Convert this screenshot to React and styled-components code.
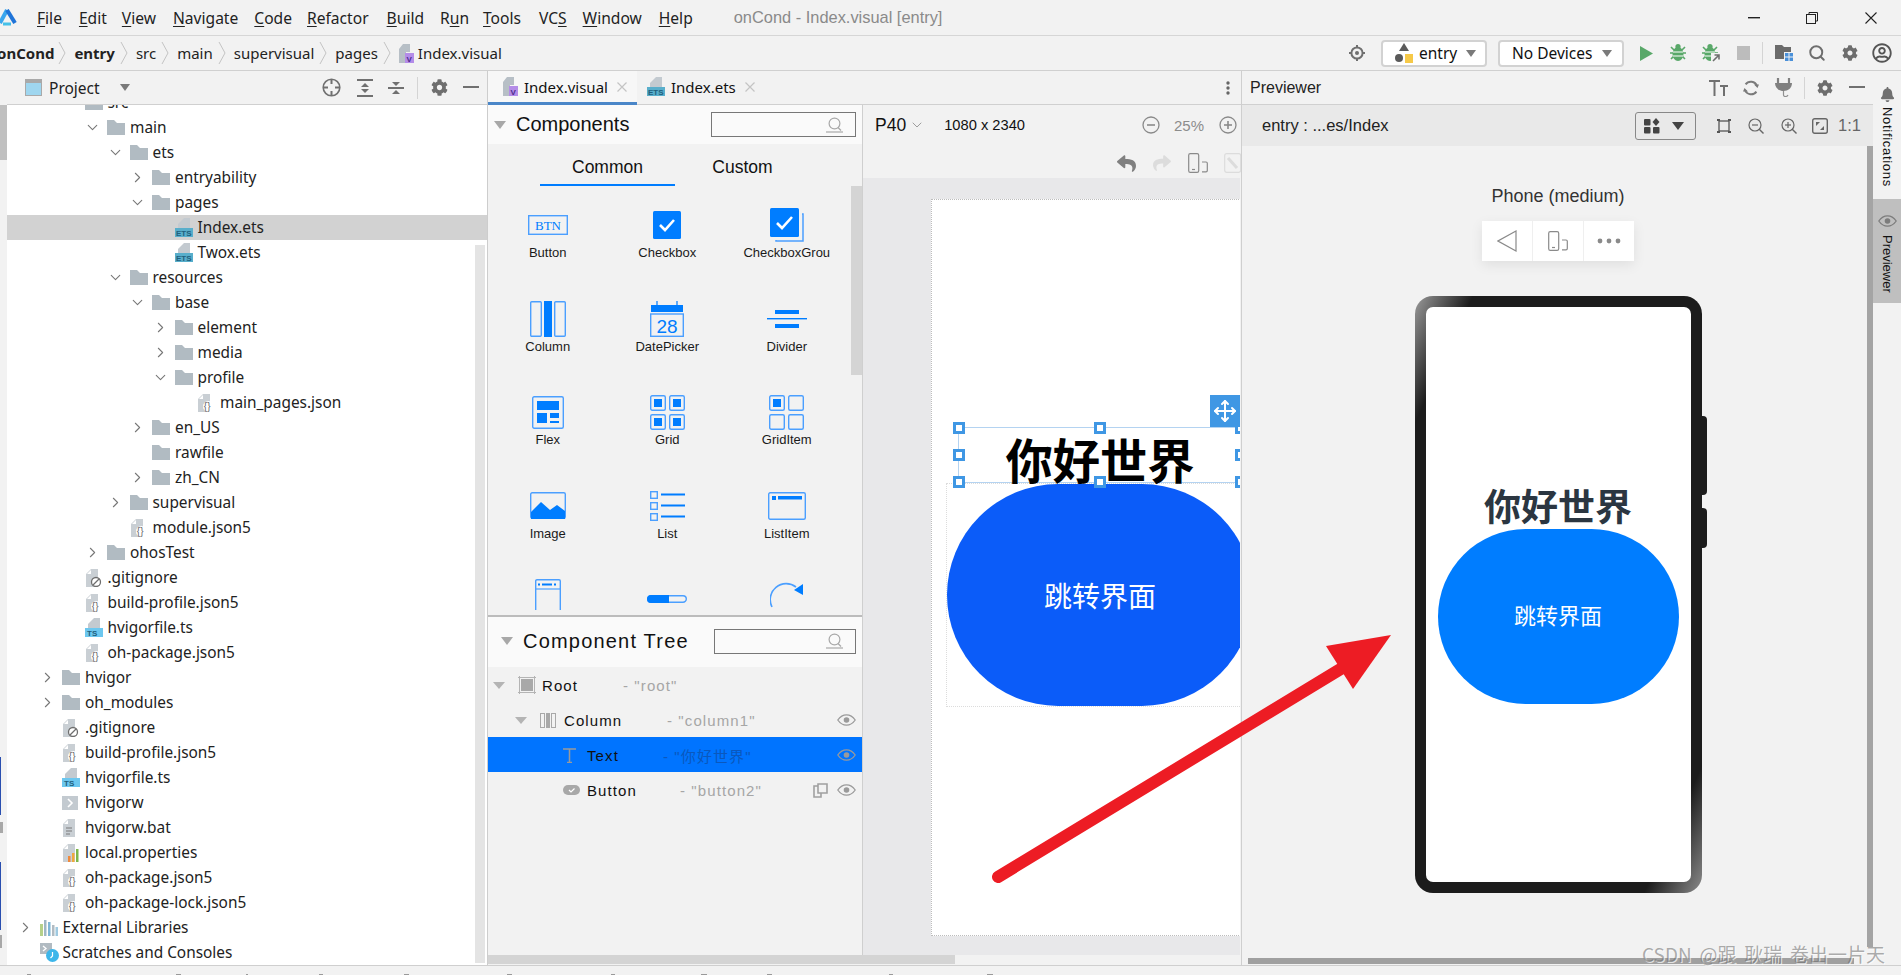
import React from 'react'
import styled, { createGlobalStyle } from 'styled-components'
import { ChevronRight, ChevronDown, Search, Move } from 'lucide-react'
import { FaCog, FaBell, FaRegUserCircle, FaReply, FaShare } from 'react-icons/fa'

const ARIAL = "'Liberation Sans', Arial, sans-serif"
const UI = "'Noto Sans', 'Noto Sans CJK SC', sans-serif"
const CJK = "'Noto Sans CJK SC', 'Liberation Sans', sans-serif"
const BLUE = '#007dff'
const SOFT = '#4b9fff'

const Global = createGlobalStyle`
  html, body { margin: 0; padding: 0; background: #f2f2f2; }
  * { box-sizing: border-box; }
`

const Frame = styled.div`
  position: relative;
  width: 1901px;
  height: 975px;
  overflow: hidden;
  display: flex;
  flex-direction: column;
  background: #f2f2f2;
  font-family: ${UI};
  color: #222;
`

/* title bar */
const TitleBar = styled.div`
  height: 36px;
  flex: none;
  display: flex;
  align-items: center;
  padding-right: 24px;
  border-bottom: 1px solid #d6d6d6;
  overflow: hidden;
`
const Menu = styled.span`
  font-size: 15.6px;
  margin-left: ${p => p.$ml}px;
  color: #222;
  flex: none;
  u { text-underline-offset: 2px; }
`
const WindowTitle = styled.span`
  margin-left: 41px;
  font-family: ${ARIAL};
  font-size: 16.4px;
  color: #8a8a8a;
  flex: none;
`
const Tool = styled.span`
  display: inline-flex;
  align-items: center;
  flex: none;
  margin-left: ${p => p.$ml || 0}px;
  color: ${p => p.$color || '#6e6e6e'};
`
const Pushed = styled(Tool)`
  margin-left: auto;
`

/* navigation bar */
const NavBar = styled.div`
  height: 35px;
  flex: none;
  display: flex;
  align-items: center;
  padding-right: 9px;
  border-bottom: 1px solid #d0d0d0;
  overflow: hidden;
`
const Crumb = styled.span`
  font-size: ${p => p.$size || 15}px;
  font-weight: ${p => (p.$bold ? 700 : 400)};
  margin-left: ${p => p.$ml || 0}px;
  flex: none;
`
const Select = styled.div`
  width: ${p => p.$w}px;
  height: 27px;
  margin-left: ${p => p.$ml}px;
  padding: 0 11px 0 12px;
  flex: none;
  display: flex;
  align-items: center;
  background: #fff;
  border: 2px solid #d2d2d2;
  border-radius: 4px;
  font-size: 15px;
  color: #111;
`
const Caret = styled.span`
  display: inline-block;
  flex: none;
  width: 0;
  height: 0;
  margin-left: ${p => p.$ml || 0}px;
  border-left: ${p => p.$w / 2}px solid transparent;
  border-right: ${p => p.$w / 2}px solid transparent;
  border-top: ${p => p.$h}px solid ${p => p.$color || '#7a7a7a'};
`
const Sep = styled.span`
  width: 1px;
  height: 22px;
  flex: none;
  background: #d4d4d4;
  margin-left: ${p => p.$ml}px;
`

/* workspace */
const Workspace = styled.div`
  flex: 1;
  min-height: 0;
  display: flex;
`
const LeftStrip = styled.div`
  width: 7px;
  flex: none;
  display: flex;
  flex-direction: column;
  align-items: flex-start;
  overflow: hidden;
  padding-top: 34px;
`
const StripActive = styled.div`
  width: 7px;
  height: 55px;
  background: #c0c0c0;
  flex: none;
`
const StripTick = styled.div`
  width: ${p => p.$w}px;
  height: ${p => p.$h}px;
  margin-top: ${p => p.$mt}px;
  background: ${p => p.$color};
  flex: none;
`

const ProjectPanel = styled.div`
  width: 481px;
  flex: none;
  display: flex;
  flex-direction: column;
  position: relative;
  background: #fff;
  border-right: 1px solid #cdcdcd;
`
const PanelHeader = styled.div`
  height: 34px;
  flex: none;
  display: flex;
  align-items: center;
  padding: ${p => p.$pad || '0 8px 0 18px'};
  background: #f2f2f2;
  border-bottom: 1px solid #d0d0d0;
  font-size: ${p => p.$size || 15}px;
`
const TreeScroll = styled.div`
  flex: 1;
  min-height: 0;
  overflow: hidden;
`
const TreeInner = styled.div`
  margin-top: -15px;
`
const TreeRow = styled.div`
  height: 25px;
  display: flex;
  align-items: center;
  padding-left: ${p => 9.5 + 22.5 * p.$d}px;
  background: ${p => (p.$selected ? '#d2d2d2' : 'transparent')};
  font-size: 15.4px;
  color: #222;
  white-space: nowrap;
`
const Arrow = styled.span`
  width: 23px;
  flex: none;
  display: flex;
  color: #777;
`
const IconSlot = styled.span`
  width: 23px;
  flex: none;
  display: flex;
  align-items: center;
`
const ProjectScroll = styled.div`
  position: absolute;
  left: 468px;
  top: 174px;
  width: 10px;
  height: 718px;
  background: #e4e4e4;
`

/* centre column */
const CenterColumn = styled.div`
  width: 754px;
  flex: none;
  display: flex;
  flex-direction: column;
  border-right: 1px solid #cfcfcf;
`
const TabBar = styled.div`
  height: 34px;
  flex: none;
  display: flex;
  align-items: stretch;
  border-bottom: 1px solid #d0d0d0;
  padding-right: 11px;
`
const Tab = styled.div`
  width: ${p => p.$w}px;
  flex: none;
  display: flex;
  align-items: center;
  padding-left: ${p => p.$pad}px;
  margin-bottom: -1px;
  font-size: 15px;
  color: #111;
  background: ${p => (p.$active ? '#f7f7f7' : 'transparent')};
  border-bottom: 3px solid ${p => (p.$active ? '#4a86c8' : 'transparent')};
`
const TabClose = styled.span`
  margin-left: ${p => p.$ml}px;
  color: #c4c4c4;
  display: flex;
`
const KebabSlot = styled(Pushed)`
  align-self: center;
`
const CenterBody = styled.div`
  flex: 1;
  min-height: 0;
  display: flex;
`
const HScrollTrack = styled.div`
  height: 10px;
  flex: none;
  background: #f2f2f2;
`
const HScrollThumb = styled.div`
  width: 467px;
  height: 9px;
  background: #d4d4d4;
`

/* components palette */
const Palette = styled.div`
  width: 375px;
  flex: none;
  display: flex;
  flex-direction: column;
  border-right: 1px solid #cfcfcf;
  background: #f2f2f2;
  font-family: ${ARIAL};
`
const SectionHead = styled.div`
  height: ${p => p.$h}px;
  flex: none;
  display: flex;
  align-items: center;
  background: #fafafa;
  padding: 0 6px ${p => p.$lift || 0}px ${p => p.$pad}px;
`
const SectionTitle = styled.span`
  margin-left: 10px;
  font-size: 20px;
  letter-spacing: ${p => p.$spacing || 0}px;
  color: #111;
`
const SearchBox = styled.div`
  margin-left: auto;
  width: ${p => p.$w}px;
  height: 25px;
  flex: none;
  display: flex;
  align-items: center;
  justify-content: flex-end;
  padding-right: 12px;
  border: 1.5px solid #777;
`
const PaletteTabs = styled.div`
  height: 42px;
  flex: none;
  display: flex;
  padding-left: 52px;
`
const PaletteTab = styled.div`
  width: ${p => p.$w}px;
  display: flex;
  align-items: center;
  justify-content: center;
  font-size: 17.5px;
  color: #111;
  padding-top: 6px;
  border-bottom: 2px solid ${p => (p.$active ? BLUE : 'transparent')};
`
const PaletteBody = styled.div`
  position: relative;
  height: 424px;
  flex: none;
  overflow: hidden;
  padding-top: 19px;
  margin-bottom: 5px;
`
const PaletteGrid = styled.div`
  display: grid;
  grid-template-columns: repeat(3, 119.5px);
  grid-auto-rows: 93.6px;
`
const PaletteCell = styled.div`
  display: flex;
  flex-direction: column;
  align-items: center;
`
const CellIcon = styled.div`
  height: 40px;
  display: flex;
  align-items: center;
  justify-content: center;
`
const CellLabel = styled.div`
  height: 16px;
  line-height: 16px;
  font-size: 13px;
  color: #1a1a1a;
  white-space: nowrap;
`
const PaletteScrollbar = styled.div`
  position: absolute;
  right: 0;
  top: 0;
  width: 11px;
  height: 189px;
  background: #d4d4d4;
`
const TreeSection = styled.div`
  flex: 1;
  min-height: 0;
  border-top: 2px solid #bcbcbc;
  display: flex;
  flex-direction: column;
`
const CompRow = styled.div`
  height: 35px;
  flex: none;
  display: flex;
  align-items: center;
  padding-top: 1px;
  padding-left: ${p => p.$indent + 5}px;
  padding-right: 6px;
  background: ${p => (p.$selected ? '#0074ff' : 'transparent')};
  font-size: 15px;
  letter-spacing: 1.1px;
  white-space: nowrap;
`
const CompCaret = styled.span`
  width: 25px;
  flex: none;
  display: flex;
`
const CompIcon = styled.span`
  width: 24px;
  flex: none;
  display: flex;
  align-items: center;
`
const CompName = styled.span`
  width: ${p => p.$w}px;
  flex: none;
  color: #111;
`
const CompId = styled.span`
  color: ${p => (p.$selected ? '#0a58bd' : '#a6a6a6')};
  font-family: ${ARIAL}, ${CJK};
`
const RowActions = styled.span`
  margin-left: auto;
  display: flex;
  align-items: center;
  gap: 9px;
`

/* design canvas */
const Canvas = styled.div`
  flex: 1;
  min-width: 0;
  display: flex;
  flex-direction: column;
  overflow: hidden;
  font-family: ${ARIAL};
`
const CanvasTools = styled.div`
  height: 73px;
  flex: none;
  padding: 0 0 0 12px;
`
const ToolRow = styled.div`
  height: ${p => p.$h}px;
  display: flex;
  align-items: center;
  justify-content: ${p => (p.$end ? 'flex-end' : 'flex-start')};
  overflow: hidden;
`
const DeviceName = styled.span`
  font-size: 17.5px;
  color: #111;
`
const Resolution = styled.span`
  font-size: 14.7px;
  margin-left: 19px;
  color: #111;
`
const Zoom = styled.span`
  font-size: 15px;
  margin-left: 14px;
  color: #8c8c8c;
`
const CanvasArea = styled.div`
  position: relative;
  flex: 1;
  min-height: 0;
  background: #e8e8ea;
  padding: 21px 0 0 68px;
  overflow: hidden;
  border-right: 1px solid #f2f2f2;
`
const Page = styled.div`
  width: 400px;
  height: 737px;
  background: #fff;
  border: 1px dotted #bdbdbd;
  padding: 227px 0 0 14px;
`
const PageColumn = styled.div`
  width: 308px;
  display: flex;
  flex-direction: column;
  align-items: center;
`
const SelectedBox = styled.div`
  position: relative;
  width: 284px;
  height: 56px;
  flex: none;
  border: 1.5px solid #b4d3f1;
  display: flex;
  justify-content: center;
  font-family: ${CJK};
  font-weight: 700;
  font-size: 47.3px;
  line-height: 62px;
  color: #000;
  white-space: nowrap;
`
const Handle = styled.span`
  position: absolute;
  left: ${p => p.$x}%;
  top: ${p => p.$y}%;
  width: 12px;
  height: 12px;
  transform: translate(-50%, -50%);
  background: #fff;
  border: 3px solid #3f97e4;
`
const MoveHandle = styled.span`
  position: absolute;
  right: -1px;
  top: -33px;
  width: 32px;
  height: 32px;
  background: #3f97e4;
  color: #fff;
  display: flex;
  align-items: center;
  justify-content: center;
  padding-right: 3px;
`
const ButtonFrame = styled.div`
  border: 1px dotted #dcdcdc;
  flex: none;
`
const DesignButton = styled.div`
  width: 306px;
  height: 222px;
  border-radius: 112px;
  background: #0b5cf9;
  color: #fff;
  display: flex;
  align-items: center;
  justify-content: center;
  font-family: ${CJK};
  font-size: 28px;
`

/* previewer */
const Preview = styled.div`
  position: relative;
  width: 631px;
  flex: none;
  display: flex;
  flex-direction: column;
  font-family: ${ARIAL};
`
const PreviewBar = styled.div`
  height: 41px;
  flex: none;
  display: flex;
  align-items: center;
  padding: 0 12px 0 20px;
  background: #e9e9e9;
  font-size: 16.5px;
  color: #222;
`
const PreviewSelect = styled.div`
  margin-left: auto;
  width: 61px;
  height: 28px;
  flex: none;
  display: flex;
  align-items: center;
  padding: 0 8px;
  gap: 12px;
  border: 1px solid #888;
  border-radius: 3px;
`
const PreviewBody = styled.div`
  flex: 1;
  min-height: 0;
  display: flex;
  flex-direction: column;
  align-items: center;
  padding-top: 39px;
  padding-left: 1px;
`
const DeviceLabel = styled.div`
  height: 22px;
  line-height: 22px;
  font-size: 18px;
  color: #333;
`
const DeviceTools = styled.div`
  margin-top: 14px;
  width: 152px;
  height: 40px;
  flex: none;
  display: flex;
  background: #fff;
  box-shadow: 0 4px 12px rgba(0, 0, 0, 0.08);
`
const DeviceTool = styled.div`
  flex: 1;
  display: flex;
  align-items: center;
  justify-content: center;
  & + & { border-left: 1px solid #efefef; }
`
const Phone = styled.div`
  position: relative;
  margin-top: 35px;
  width: 287px;
  height: 597px;
  flex: none;
  padding: 11px;
  border-radius: 18px;
  background: linear-gradient(114.5deg, #9a9a9a 0, #1c1c1c 10.4%, #1c1c1c 89.6%, #8a8a8a 100%);
`
const PhoneKey = styled.span`
  position: absolute;
  right: -5px;
  top: ${p => p.$top}px;
  width: 6px;
  height: ${p => p.$h}px;
  background: #1c1c1c;
  border-radius: 0 4px 4px 0;
`
const Screen = styled.div`
  height: 100%;
  background: #fff;
  border-radius: 7px;
  display: flex;
  flex-direction: column;
  align-items: center;
  justify-content: center;
  padding-bottom: 4px;
  font-family: ${CJK};
`
const PhoneText = styled.div`
  height: 48px;
  line-height: 48px;
  font-size: 37px;
  font-weight: 700;
  color: #2b3641;
`
const PhoneButton = styled.div`
  width: 241px;
  height: 175px;
  flex: none;
  padding-bottom: 6px;
  border-radius: 88px;
  background: ${BLUE};
  color: #fff;
  font-size: 22px;
  display: flex;
  align-items: center;
  justify-content: center;
`
const VScroll = styled.div`
  position: absolute;
  right: 0;
  top: 75px;
  width: 6px;
  height: 801px;
  background: #a4a4a4;
`
const BottomScroll = styled.div`
  position: absolute;
  left: 6px;
  bottom: 1px;
  width: 606px;
  height: 6px;
  background: #a0a0a0;
`

/* right tool strip */
const RightStrip = styled.div`
  width: 28px;
  flex: none;
  display: flex;
  flex-direction: column;
  align-items: center;
  padding-top: 16px;
  font-family: ${ARIAL};
  font-size: 13px;
  color: #111;
`
const VerticalLabel = styled.span`
  writing-mode: vertical-rl;
  margin-top: ${p => p.$mt}px;
  letter-spacing: ${p => p.$spacing || 0}px;
  flex: none;
`
const StripTab = styled.div`
  width: 28px;
  height: 104px;
  flex: none;
  margin-top: 12px;
  padding-top: 16px;
  background: #bfbfbf;
  display: flex;
  flex-direction: column;
  align-items: center;
`

const StatusBar = styled.div`
  height: 10px;
  flex: none;
  display: flex;
  align-items: flex-end;
  background: #f2f2f2;
  border-top: 1px solid #cfcfcf;
  overflow: hidden;
`
const StatusTip = styled.span`
  width: ${p => p.$w}px;
  height: 1px;
  margin-left: ${p => p.$ml}px;
  flex: none;
  background: #999;
`
const Watermark = styled.div`
  position: absolute;
  right: 16px;
  bottom: 9px;
  font-family: ${CJK};
  font-size: 19px;
  word-spacing: 3.5px;
  line-height: 24px;
  color: rgba(105, 105, 105, 0.55);
  text-shadow: 1px 1px 0 rgba(255, 255, 255, 0.7);
  white-space: nowrap;
`
const Annotation = styled.svg`
  position: absolute;
  left: 0;
  top: 0;
  pointer-events: none;
`

/* ---- icons ---- */
const IcoSvg = styled.svg`
  display: block;
  flex: none;
`
const Ico = ({ w, h, children }) => (
  <IcoSvg width={w} height={h} viewBox={`0 0 ${w} ${h}`} fill="none">{children}</IcoSvg>
)

const Logo = () => (
  <Ico w={17} h={17}>
    <path d="M7 1 L0 14" stroke="#3aa6ee" strokeWidth="4" />
    <path d="M7 1 L15 14" stroke="#1f74d8" strokeWidth="4" />
    <path d="M3 15 H11" stroke="#45c0e8" strokeWidth="3" />
  </Ico>
)
const Thin = ({ h = 24 }) => (
  <Ico w={9} h={h}><path d={`M1 1 L7 ${h / 2} L1 ${h - 1}`} stroke="#c4c4c4" /></Ico>
)
const Folder = () => (
  <Ico w={18} h={15}><path d="M0 0 H7 L10 3 H18 V15 H0 Z" fill="#b1bbc2" /></Ico>
)
const FileIcon = ({ kind }) => {
  if (kind === 'ets' || kind === 'ts') {
    const band = kind === 'ets' ? '#58aecb' : '#6cc7ef'
    return (
      <Ico w={18} h={19}>
        <path d="M9 0 H15 V10 H3 V6 Z" fill="#c3cad0" />
        <rect x="0" y="10" width="18" height="9" fill={band} />
        <text x={kind === 'ets' ? 1 : 2} y="17.6" fontFamily={ARIAL} fontSize="8" fontWeight="700" fill="#21607d">{kind.toUpperCase()}</text>
      </Ico>
    )
  }
  if (kind === 'visual') {
    return (
      <Ico w={16} h={19}>
        <path d="M5 0 H12 V8 H8 V19 H1 V5 Z" fill="#b7bfc6" />
        <rect x="7" y="9" width="9" height="10" fill="#b48ce8" />
        <text x="8.6" y="17.6" fontFamily={ARIAL} fontSize="8" fontWeight="700" fill="#4a2a8a">V</text>
      </Ico>
    )
  }
  if (kind === 'shell') {
    return (
      <Ico w={16} h={14}>
        <rect width="16" height="14" fill="#c3cad0" />
        <path d="M6 3 L10 7 L6 11" stroke="#fff" strokeWidth="1.6" />
      </Ico>
    )
  }
  return (
    <Ico w={17} h={18}>
      <path d="M6 0 H13 V18 H1 V5 Z" fill="#c9cfd4" />
      <path d="M6 1 V5 H2 Z" fill="#fff" />
      {kind === 'json' && (
        <>
          <circle cx="11.5" cy="12.5" r="5.5" fill="#fff" />
          <text x="6.8" y="16.2" fontFamily={ARIAL} fontSize="10" fill="#6a6a6a">{'{}'}</text>
        </>
      )}
      {kind === 'ignore' && (
        <>
          <circle cx="11" cy="13" r="4.5" fill="#fff" stroke="#6e6e6e" strokeWidth="1.3" />
          <path d="M8 16 L14 10" stroke="#6e6e6e" strokeWidth="1.2" />
        </>
      )}
      {kind === 'bat' && <path d="M4 9 H10 M4 12 H10 M4 15 H8" stroke="#7a7a7a" strokeWidth="1.2" />}
      {kind === 'props' && (
        <>
          <rect x="6" y="12" width="2.5" height="6" fill="#f08a3c" />
          <rect x="10" y="9" width="2.5" height="9" fill="#f0a83c" />
          <rect x="14" y="5" width="2.5" height="13" fill="#7cb84a" />
        </>
      )}
    </Ico>
  )
}
const LibIcon = () => (
  <Ico w={18} h={16}>
    <rect x="0" y="4" width="3" height="12" fill="#b5d08a" />
    <rect x="4" y="0" width="2.5" height="16" fill="#9fb6c4" />
    <rect x="8" y="2" width="2.5" height="14" fill="#7fb6d6" />
    <rect x="12" y="5" width="2.5" height="11" fill="#b1bbc2" />
    <rect x="15.5" y="7" width="2.5" height="9" fill="#9fc9e0" />
  </Ico>
)
const ScratchIcon = () => (
  <Ico w={19} h={19}>
    <rect x="0" y="0" width="12" height="11" fill="#b1bbc2" />
    <path d="M3 3 L6 5.5 L3 8" stroke="#fff" strokeWidth="1.3" />
    <circle cx="12.5" cy="12.5" r="6.5" fill="#3db6ea" />
    <path d="M12.5 9 V13 L10.5 15" stroke="#fff" strokeWidth="1.2" />
  </Ico>
)
const ProjectIcon = () => (
  <Ico w={17} h={17}>
    <rect x=".5" y=".5" width="16" height="16" fill="#9fd6ef" stroke="#a9a9a9" />
    <rect x="1" y="1" width="15" height="3" fill="#a9a9a9" />
  </Ico>
)
const Locate = () => (
  <Ico w={19} h={19}>
    <circle cx="9.5" cy="9.5" r="8.3" stroke="#707070" strokeWidth="1.6" />
    <path d="M9.5 1 V6 M9.5 13 V18 M1 9.5 H6 M13 9.5 H18" stroke="#707070" strokeWidth="2" />
  </Ico>
)
const ExpandAll = () => (
  <Ico w={16} h={18}>
    <path d="M0 1 H16 M0 17 H16" stroke="#707070" strokeWidth="2" />
    <path d="M8 4 L12 8 H4 Z M8 14 L4 10 H12 Z" fill="#707070" />
  </Ico>
)
const CollapseAll = () => (
  <Ico w={16} h={18}>
    <path d="M0 9 H16" stroke="#707070" strokeWidth="2" />
    <path d="M8 7 L4 3 H12 Z M8 11 L12 15 H4 Z" fill="#707070" />
  </Ico>
)
const MinusBar = () => <Ico w={16} h={3}><rect width="16" height="2" fill="#707070" /></Ico>
const Target = () => (
  <Ico w={16} h={16}>
    <circle cx="8" cy="8" r="5.6" stroke="#707070" strokeWidth="2" />
    <circle cx="8" cy="8" r="2" fill="#707070" />
    <path d="M8 0 V3 M8 13 V16 M0 8 H3 M13 8 H16" stroke="#707070" strokeWidth="2" />
  </Ico>
)
const EntryIcon = () => (
  <Ico w={18} h={20}>
    <path d="M9 0 L14 8 H4 Z" fill="#5a5a5a" />
    <circle cx="4" cy="15" r="4" fill="#5a5a5a" />
    <rect x="10" y="11" width="8" height="9" fill="#f6c948" />
  </Ico>
)
const Play = () => <Ico w={13} h={15}><path d="M0 0 L13 7.5 L0 15 Z" fill="#59a869" /></Ico>
const BugBody = ({ stripe = '#fff' }) => (
  <>
    <path d="M1 3 L4 6 M15 3 L12 6 M0 9 H3 M13 9 H16 M1 15 L4 12 M15 15 L12 12" stroke="#59a869" strokeWidth="1.6" />
    <ellipse cx="8" cy="10" rx="5.5" ry="7" fill="#59a869" />
    <circle cx="8" cy="2.6" r="2.6" fill="#59a869" />
    <path d="M3 8 H13 M3 12 H13" stroke={stripe} strokeWidth="1.2" />
  </>
)
const Bug = () => <Ico w={16} h={18}><BugBody /></Ico>
const BugAttach = () => (
  <Ico w={18} h={18}>
    <BugBody />
    <rect x="9" y="9" width="9" height="9" fill="#f2f2f2" />
    <path d="M11 17 L17 11 M12.5 11 H17 V15.5" stroke="#6e6e6e" strokeWidth="1.6" />
  </Ico>
)
const Stop = () => <Ico w={13} h={14}><rect width="13" height="14" fill="#bcbcbc" /></Ico>
const FolderModules = () => (
  <Ico w={18} h={16}>
    <path d="M0 0 H7 L9 2 H16 V14 H0 Z" fill="#6b6b6b" />
    <rect x="9" y="7" width="9" height="9" fill="#f2f2f2" />
    <rect x="10" y="8" width="3.5" height="3.5" fill="#4a90d9" />
    <rect x="14.5" y="8" width="3.5" height="3.5" fill="#4a90d9" />
    <rect x="10" y="12.5" width="3.5" height="3.5" fill="#4a90d9" />
    <rect x="14.5" y="12.5" width="3.5" height="3.5" fill="#4a90d9" />
  </Ico>
)
const WinMin = () => <Ico w={12} h={2}><rect width="12" height="1.4" fill="#222" /></Ico>
const WinRestore = () => (
  <Ico w={12} h={12}>
    <rect x=".5" y="2.5" width="9" height="9" stroke="#222" />
    <path d="M3 2.5 V.5 H11.5 V9 H9.5" stroke="#222" />
  </Ico>
)
const WinClose = () => <Ico w={12} h={12}><path d="M.5 .5 L11.5 11.5 M11.5 .5 L.5 11.5" stroke="#222" strokeWidth="1.1" /></Ico>
const SmallX = () => <Ico w={10} h={10}><path d="M.5 .5 L9.5 9.5 M9.5 .5 L.5 9.5" stroke="currentColor" strokeWidth="1.2" /></Ico>
const Kebab = () => (
  <Ico w={4} h={14}>
    <circle cx="2" cy="2" r="1.7" fill="#666" />
    <circle cx="2" cy="7" r="1.7" fill="#666" />
    <circle cx="2" cy="12" r="1.7" fill="#666" />
  </Ico>
)
const SearchFlat = () => (
  <Ico w={17} h={16}>
    <circle cx="8.5" cy="6.5" r="5.4" stroke="#a8a8a8" strokeWidth="1.2" />
    <path d="M12 10.5 L15 13.5" stroke="#a8a8a8" strokeWidth="1.3" />
    <path d="M0 15 H17" stroke="#a8a8a8" strokeWidth="1.2" />
  </Ico>
)
const TextSize = () => (
  <Ico w={19} h={16}>
    <path d="M0 1 H11 M5.5 1 V16 M11 6 H19 M15 6 V16" stroke="#707070" strokeWidth="2" />
  </Ico>
)
const Refresh = () => (
  <Ico w={16} h={16}>
    <path d="M14 6 A6.5 6.5 0 0 0 2.6 4.4 M2 10 A6.5 6.5 0 0 0 13.4 11.6" stroke="#7a7a7a" strokeWidth="2" />
    <path d="M14.5 8 L11 4.5 H16 Z M1.5 8 L5 11.5 H0 Z" fill="#7a7a7a" />
  </Ico>
)
const Plug = () => (
  <Ico w={17} h={19}>
    <path d="M3 0 V5 M14 0 V5" stroke="#808080" strokeWidth="2.2" />
    <path d="M0 5 H17 C17 10 13 13 8.5 13 C4 13 0 10 0 5 Z" fill="#808080" />
    <path d="M8.5 13 V17 C8.5 19 12 19 13 17" stroke="#909090" strokeWidth="1.2" />
  </Ico>
)
const Frames = () => (
  <Ico w={14} h={14}>
    <rect x="2" y="2" width="10" height="10" stroke="#555" strokeWidth="1.3" />
    <path d="M0 1 H3 M11 1 H14 M0 13 H3 M11 13 H14" stroke="#555" strokeWidth="2" />
  </Ico>
)
const ZoomGlass = ({ plus }) => (
  <Ico w={16} h={16}>
    <circle cx="7" cy="7" r="6" stroke="#666" strokeWidth="1.2" />
    <path d="M11 11 L15.5 15.5" stroke="#666" strokeWidth="1.4" />
    <path d="M4 7 H10" stroke="#666" strokeWidth="1.2" />
    {plus && <path d="M7 4 V10" stroke="#666" strokeWidth="1.2" />}
  </Ico>
)
const Fit = () => (
  <Ico w={16} h={16}>
    <rect x=".7" y=".7" width="14.6" height="14.6" rx="2" stroke="#666" strokeWidth="1.4" />
    <path d="M4 8 V4 H8 Z M12 8 V12 H8 Z" fill="#666" />
  </Ico>
)
const Layouts = () => (
  <Ico w={16} h={16}>
    <rect x="0" y="1" width="6.5" height="6.5" rx="1" fill="#444" />
    <path d="M12 0 L15.5 4 L12 8 L8.5 4 Z" fill="#444" />
    <rect x="0" y="9" width="6.5" height="6.5" rx="1" fill="#444" />
    <rect x="9" y="9" width="6.5" height="6.5" rx="1" fill="#444" />
  </Ico>
)
const CircleSign = ({ plus }) => (
  <Ico w={18} h={18}>
    <circle cx="9" cy="9" r="8" stroke="#8a8a8a" strokeWidth="1.3" />
    <path d="M5 9 H13" stroke="#8a8a8a" strokeWidth="1.6" />
    {plus && <path d="M9 5 V13" stroke="#8a8a8a" strokeWidth="1.6" />}
  </Ico>
)
const RotateDevice = ({ color = '#8a8a8a' }) => (
  <Ico w={20} h={20}>
    <rect x=".7" y=".7" width="10" height="18.6" rx="1.6" stroke={color} strokeWidth="1.2" />
    <path d="M4 16.5 H7" stroke={color} strokeWidth="1.2" />
    <path d="M14 9 H18 A1.3 1.3 0 0 1 19.3 10.3 V17.5 A1.3 1.3 0 0 1 18 18.8 H14" stroke={color} strokeWidth="1.2" />
  </Ico>
)
const Faint = () => (
  <Ico w={17} h={20}>
    <rect x=".7" y=".7" width="16" height="18.6" rx="2" stroke="#dcdcdc" strokeWidth="1.2" />
    <path d="M4 5 L13 15" stroke="#dcdcdc" strokeWidth="3" />
  </Ico>
)
const Back = () => <Ico w={20} h={22}><path d="M19 1 L1 11 L19 21 Z" stroke="#8a8a8a" strokeWidth="1.2" /></Ico>
const Dots = () => (
  <Ico w={24} h={6}>
    <circle cx="3" cy="3" r="2.4" fill="#8a8a8a" />
    <circle cx="12" cy="3" r="2.4" fill="#8a8a8a" />
    <circle cx="21" cy="3" r="2.4" fill="#8a8a8a" />
  </Ico>
)
const Eye = ({ color = '#9a9a9a' }) => (
  <Ico w={19} h={12}>
    <path d="M.8 6 C4 1.4 7 .8 9.5 .8 C12 .8 15 1.4 18.2 6 C15 10.6 12 11.2 9.5 11.2 C7 11.2 4 10.6 .8 6 Z" stroke={color} strokeWidth="1.3" />
    <circle cx="9.5" cy="6" r="2.8" fill={color} />
  </Ico>
)
const CopyMark = () => (
  <Ico w={15} h={15}>
    <path d="M5 3 H1 V14 H8 V10 M5 1 H14 V10 H5 Z" stroke="#a0a0a0" strokeWidth="1.6" />
  </Ico>
)
const RootIcon = () => (
  <Ico w={18} h={18}>
    <rect x="3" y="3" width="12" height="12" fill="#a8a8a8" />
    <path d="M0 1.5 H18 M0 16.5 H18 M1.5 0 V18 M16.5 0 V18" stroke="#b4b4b4" />
  </Ico>
)
const ColumnMini = () => (
  <Ico w={16} h={15}>
    <rect x=".5" y=".5" width="4" height="14" stroke="#a8a8a8" />
    <rect x="6" y="0" width="4" height="15" fill="#a8a8a8" />
    <rect x="11.5" y=".5" width="4" height="14" stroke="#a8a8a8" />
  </Ico>
)
const TextMini = () => (
  <Ico w={13} h={15}><path d="M0 1 H13 M6.5 1 V14.5 M4 14.5 H9" stroke="#9a9a9a" strokeWidth="1.5" /></Ico>
)
const ButtonMini = () => (
  <Ico w={17} h={10}>
    <rect width="17" height="10" rx="5" fill="#a8a8a8" />
    <path d="M6 5 L8 7 L11.5 3.5" stroke="#fff" strokeWidth="1.2" />
  </Ico>
)

/* palette drawings */
const BtnGlyph = () => (
  <Ico w={40} h={20}>
    <rect x=".7" y=".7" width="38.6" height="18.6" stroke={SOFT} strokeWidth="1.4" />
    <text x="7" y="15" fontFamily="'Liberation Serif', serif" fontSize="13" fill={BLUE}>BTN</text>
  </Ico>
)
const CheckGlyph = () => (
  <Ico w={28} h={28}>
    <rect width="28" height="28" rx="1.5" fill={BLUE} />
    <path d="M7 14 L12 19 L21 9" stroke="#fff" strokeWidth="2.6" />
  </Ico>
)
const CheckGroupGlyph = () => (
  <Ico w={34} h={34}>
    <path d="M32 6 H33 V33 H6 V32" stroke={SOFT} strokeWidth="1.5" />
    <rect width="29" height="29" rx="1.5" fill={BLUE} />
    <path d="M7 15 L12 20 L22 9" stroke="#fff" strokeWidth="2.6" />
  </Ico>
)
const ColumnGlyph = () => (
  <Ico w={36} h={36}>
    <rect x=".7" y=".7" width="10.6" height="34.6" rx="1" stroke={SOFT} strokeWidth="1.4" />
    <rect x="14" y="0" width="8" height="36" fill={BLUE} />
    <rect x="24.7" y=".7" width="10.6" height="34.6" rx="1" stroke={SOFT} strokeWidth="1.4" />
  </Ico>
)
const DateGlyph = () => (
  <Ico w={34} h={36}>
    <path d="M1 4 H33 V11 H1 Z" fill={BLUE} />
    <path d="M7 0 V5 M27 0 V5" stroke={BLUE} strokeWidth="1.2" />
    <rect x=".7" y="13" width="32.6" height="22.3" stroke={SOFT} strokeWidth="1.4" />
    <text x="17" y="31.5" textAnchor="middle" fontFamily={ARIAL} fontSize="19" fill={BLUE}>28</text>
  </Ico>
)
const DividerGlyph = () => (
  <Ico w={40} h={18}>
    <rect x="8" y="0" width="24" height="4" fill={BLUE} />
    <rect x="0" y="8" width="40" height="1.4" fill={BLUE} />
    <rect x="8" y="14" width="24" height="4" fill={BLUE} />
  </Ico>
)
const FlexGlyph = () => (
  <Ico w={32} h={33}>
    <rect x=".7" y=".7" width="30.6" height="31.6" rx="1.5" stroke={SOFT} strokeWidth="1.4" />
    <rect x="5" y="5" width="22" height="9" fill={BLUE} />
    <rect x="5" y="17" width="10" height="10" fill={BLUE} />
    <rect x="18" y="17" width="9" height="5" fill={BLUE} />
    <rect x="18" y="25" width="9" height="2" fill={BLUE} />
  </Ico>
)
const GridGlyph = ({ filled }) => {
  const cells = [[0, 0], [19, 0], [0, 19], [19, 19]]
  return (
    <Ico w={35} h={35}>
      {cells.map(([x, y], i) => (
        <g key={i}>
          <rect x={x + 0.7} y={y + 0.7} width="14.6" height="14.6" rx="1.5" stroke={SOFT} strokeWidth="1.4" />
          {i < filled && <rect x={x + 4} y={y + 4} width="8" height="8" fill={BLUE} />}
        </g>
      ))}
    </Ico>
  )
}
const ImageGlyph = () => (
  <Ico w={36} h={27}>
    <rect x=".7" y=".7" width="34.6" height="25.6" rx="1.5" stroke={SOFT} strokeWidth="1.4" />
    <path d="M1 20 L11 10 L20 18 L27 13 L35 19 V27 H1 Z" fill={BLUE} />
  </Ico>
)
const ListGlyph = () => (
  <Ico w={35} h={30}>
    {[0, 11, 22].map(y => (
      <g key={y}>
        <rect x=".7" y={y + 0.7} width="6.6" height="6.6" stroke={SOFT} strokeWidth="1.4" />
        <rect x="11" y={y + 2.5} width="24" height="2" fill={BLUE} />
      </g>
    ))}
  </Ico>
)
const ListItemGlyph = () => (
  <Ico w={38} h={28}>
    <rect x=".7" y=".7" width="36.6" height="26.6" rx="1.5" stroke={SOFT} strokeWidth="1.4" />
    <rect x="4" y="4" width="4" height="4" fill={BLUE} />
    <rect x="10" y="4" width="24" height="3.5" fill={BLUE} />
  </Ico>
)
const NavGlyph = () => (
  <Ico w={26} h={40}>
    <path d="M.7 40 V2 A1.3 1.3 0 0 1 2 .7 H24 A1.3 1.3 0 0 1 25.3 2 V40" stroke={SOFT} strokeWidth="1.4" />
    <path d="M1 10 H25" stroke={SOFT} strokeWidth="1.2" />
    <rect x="3" y="4.5" width="2" height="2" fill={BLUE} />
    <rect x="7" y="4.5" width="10" height="2" fill={BLUE} />
    <rect x="19" y="4.5" width="2" height="2" fill={BLUE} />
  </Ico>
)
const ProgressGlyph = () => (
  <Ico w={40} h={8}>
    <rect x=".7" y=".7" width="38.6" height="6.6" rx="3.3" stroke={SOFT} strokeWidth="1.4" />
    <path d="M4 0 H22 V8 H4 A4 4 0 0 1 4 0 Z" fill={BLUE} />
  </Ico>
)
const RefreshGlyph = () => (
  <Ico w={34} h={38}>
    <path d="M2 27 A16 16 0 0 1 26 7" stroke={SOFT} strokeWidth="1.6" />
    <path d="M33 4 V15 L24 10 Z" fill={BLUE} />
  </Ico>
)

const TREE = [
  { d: 2, name: 'src', icon: 'folder' },
  { d: 3, name: 'main', icon: 'folder', arrow: 'open' },
  { d: 4, name: 'ets', icon: 'folder', arrow: 'open' },
  { d: 5, name: 'entryability', icon: 'folder', arrow: 'closed' },
  { d: 5, name: 'pages', icon: 'folder', arrow: 'open' },
  { d: 6, name: 'Index.ets', icon: 'ets', selected: true },
  { d: 6, name: 'Twox.ets', icon: 'ets' },
  { d: 4, name: 'resources', icon: 'folder', arrow: 'open' },
  { d: 5, name: 'base', icon: 'folder', arrow: 'open' },
  { d: 6, name: 'element', icon: 'folder', arrow: 'closed' },
  { d: 6, name: 'media', icon: 'folder', arrow: 'closed' },
  { d: 6, name: 'profile', icon: 'folder', arrow: 'open' },
  { d: 7, name: 'main_pages.json', icon: 'json' },
  { d: 5, name: 'en_US', icon: 'folder', arrow: 'closed' },
  { d: 5, name: 'rawfile', icon: 'folder' },
  { d: 5, name: 'zh_CN', icon: 'folder', arrow: 'closed' },
  { d: 4, name: 'supervisual', icon: 'folder', arrow: 'closed' },
  { d: 4, name: 'module.json5', icon: 'json' },
  { d: 3, name: 'ohosTest', icon: 'folder', arrow: 'closed' },
  { d: 2, name: '.gitignore', icon: 'ignore' },
  { d: 2, name: 'build-profile.json5', icon: 'json' },
  { d: 2, name: 'hvigorfile.ts', icon: 'ts' },
  { d: 2, name: 'oh-package.json5', icon: 'json' },
  { d: 1, name: 'hvigor', icon: 'folder', arrow: 'closed' },
  { d: 1, name: 'oh_modules', icon: 'folder', arrow: 'closed' },
  { d: 1, name: '.gitignore', icon: 'ignore' },
  { d: 1, name: 'build-profile.json5', icon: 'json' },
  { d: 1, name: 'hvigorfile.ts', icon: 'ts' },
  { d: 1, name: 'hvigorw', icon: 'shell' },
  { d: 1, name: 'hvigorw.bat', icon: 'bat' },
  { d: 1, name: 'local.properties', icon: 'props' },
  { d: 1, name: 'oh-package.json5', icon: 'json' },
  { d: 1, name: 'oh-package-lock.json5', icon: 'json' },
  { d: 0, name: 'External Libraries', icon: 'lib', arrow: 'closed' },
  { d: 0, name: 'Scratches and Consoles', icon: 'scratch' },
]

const PALETTE = [
  ['Button', <BtnGlyph />],
  ['Checkbox', <CheckGlyph />],
  ['CheckboxGrou', <CheckGroupGlyph />],
  ['Column', <ColumnGlyph />],
  ['DatePicker', <DateGlyph />],
  ['Divider', <DividerGlyph />],
  ['Flex', <FlexGlyph />],
  ['Grid', <GridGlyph filled={4} />],
  ['GridItem', <GridGlyph filled={1} />],
  ['Image', <ImageGlyph />],
  ['List', <ListGlyph />],
  ['ListItem', <ListItemGlyph />],
  ['', <NavGlyph />],
  ['', <ProgressGlyph />],
  ['', <RefreshGlyph />],
]

const MENUS = [
  ['F', 'ile', 37], ['E', 'dit', 17], ['V', 'iew', 15], ['N', 'avigate', 17], ['C', 'ode', 16],
  ['R', 'efactor', 15], ['B', 'uild', 18], ['R', 'un', 16], ['T', 'ools', 14], ['VC', 'S', 18],
  ['W', 'indow', 16], ['H', 'elp', 17],
]

const treeIcon = icon => {
  if (icon === 'folder') return <Folder />
  if (icon === 'lib') return <LibIcon />
  if (icon === 'scratch') return <ScratchIcon />
  return <FileIcon kind={icon} />
}

const COMP_ROWS = [
  { name: 'Root', id: '- "root"', indent: 0, nameW: 81, caret: true, icon: <RootIcon /> },
  { name: 'Column', id: '- "column1"', indent: 22, nameW: 103, caret: true, icon: <ColumnMini />, eye: true },
  { name: 'Text', id: '- "你好世界"', indent: 45, nameW: 76, icon: <TextMini />, eye: true, selected: true },
  { name: 'Button', id: '- "button2"', indent: 45, nameW: 93, icon: <ButtonMini />, eye: true, copy: true },
]

const STATUS_TIPS = [[27, 4], [145, 5], [65, 2], [71, 4], [81, 5], [98, 5], [99, 4], [86, 6], [60, 5], [117, 4], [94, 6]]

export default function App() {
  return (
    <Frame>
      <Global />
      <TitleBar>
        <Logo />
        {MENUS.map(([key, rest, ml], i) => (
          <Menu key={i} $ml={i === 0 ? ml - 17 : ml}>
            {key === 'VC' ? <>VC<u>S</u></> : key === 'R' && rest === 'un' ? <>R<u>u</u>n</> : <><u>{key}</u>{rest}</>}
          </Menu>
        ))}
        <WindowTitle>onCond - Index.visual [entry]</WindowTitle>
        <Pushed><WinMin /></Pushed>
        <Tool $ml={46}><WinRestore /></Tool>
        <Tool $ml={47}><WinClose /></Tool>
      </TitleBar>

      <NavBar>
        <Crumb $bold $ml={-3}>onCond</Crumb>
        <Tool $ml={4}><Thin /></Tool>
        <Crumb $bold $ml={7}>entry</Crumb>
        <Tool $ml={5}><Thin /></Tool>
        <Crumb $ml={7}>src</Crumb>
        <Tool $ml={5}><Thin /></Tool>
        <Crumb $ml={7}>main</Crumb>
        <Tool $ml={5}><Thin /></Tool>
        <Crumb $ml={7}>supervisual</Crumb>
        <Tool $ml={5}><Thin /></Tool>
        <Crumb $ml={7}>pages</Crumb>
        <Tool $ml={5}><Thin /></Tool>
        <Tool $ml={6}><FileIcon kind="visual" /></Tool>
        <Crumb $ml={4}>Index.visual</Crumb>
        <Pushed><Target /></Pushed>
        <Select $w={106} $ml={16}>
          <EntryIcon />
          <Crumb $ml={6} $size={15.5}>entry</Crumb>
          <Caret $w={11} $h={7} $ml={9} />
        </Select>
        <Select $w={126} $ml={11}>
          <Crumb $size={15.5}>No Devices</Crumb>
          <Caret $w={11} $h={7} $ml={10} />
        </Select>
        <Tool $ml={16}><Play /></Tool>
        <Tool $ml={17}><Bug /></Tool>
        <Tool $ml={16}><BugAttach /></Tool>
        <Tool $ml={17}><Stop /></Tool>
        <Sep $ml={12} />
        <Tool $ml={12}><FolderModules /></Tool>
        <Tool $ml={15}><Search size={18} strokeWidth={2.6} /></Tool>
        <Tool $ml={16}><FaCog size={16} /></Tool>
        <Tool $ml={14} $color="#555"><FaRegUserCircle size={20} /></Tool>
      </NavBar>

      <Workspace>
        <LeftStrip>
          <StripActive />
          <StripTick $w={1} $h={58} $mt={597} $color="#2a4fb0" />
          <StripTick $w={3} $h={11} $mt={7} $color="#a8a8a8" />
          <StripTick $w={1} $h={68} $mt={29} $color="#2a4fb0" />
          <StripTick $w={2} $h={13} $mt={5} $color="#a8a8a8" />
        </LeftStrip>

        <ProjectPanel>
          <PanelHeader>
            <ProjectIcon />
            <Crumb $ml={7} $size={15.5}>Project</Crumb>
            <Caret $w={11} $h={7} $ml={20} />
            <Pushed><Locate /></Pushed>
            <Tool $ml={16}><ExpandAll /></Tool>
            <Tool $ml={15}><CollapseAll /></Tool>
            <Sep $ml={13} />
            <Tool $ml={13}><FaCog size={17} /></Tool>
            <Tool $ml={15}><MinusBar /></Tool>
          </PanelHeader>
          <TreeScroll>
            <TreeInner>
              {TREE.map((row, i) => (
                <TreeRow key={i} $d={row.d} $selected={row.selected}>
                  <Arrow>
                    {row.arrow === 'open' && <ChevronDown size={17} strokeWidth={1.5} />}
                    {row.arrow === 'closed' && <ChevronRight size={17} strokeWidth={1.5} />}
                  </Arrow>
                  <IconSlot>{treeIcon(row.icon)}</IconSlot>
                  {row.name}
                </TreeRow>
              ))}
            </TreeInner>
          </TreeScroll>
          <ProjectScroll />
        </ProjectPanel>

        <CenterColumn>
          <TabBar>
            <Tab $active $w={149} $pad={14}>
              <FileIcon kind="visual" />
              <Crumb $ml={6}>Index.visual</Crumb>
              <TabClose $ml={9}><SmallX /></TabClose>
            </Tab>
            <Tab $w={130} $pad={10}>
              <FileIcon kind="ets" />
              <Crumb $ml={6}>Index.ets</Crumb>
              <TabClose $ml={9}><SmallX /></TabClose>
            </Tab>
            <KebabSlot><Kebab /></KebabSlot>
          </TabBar>

          <CenterBody>
            <Palette>
              <SectionHead $h={39} $pad={6}>
                <Caret $w={13} $h={8} $color="#a8a8a8" />
                <SectionTitle>Components</SectionTitle>
                <SearchBox $w={145}><SearchFlat /></SearchBox>
              </SectionHead>
              <PaletteTabs>
                <PaletteTab $active $w={135}>Common</PaletteTab>
                <PaletteTab $w={135}>Custom</PaletteTab>
              </PaletteTabs>
              <PaletteBody>
                <PaletteGrid>
                  {PALETTE.map(([label, glyph], i) => (
                    <PaletteCell key={i}>
                      <CellIcon>{glyph}</CellIcon>
                      {label && <CellLabel>{label}</CellLabel>}
                    </PaletteCell>
                  ))}
                </PaletteGrid>
                <PaletteScrollbar />
              </PaletteBody>
              <TreeSection>
                <SectionHead $h={50} $pad={13} $lift={2}>
                  <Caret $w={12} $h={8} $color="#a8a8a8" />
                  <SectionTitle $spacing={1.2}>Component Tree</SectionTitle>
                  <SearchBox $w={142}><SearchFlat /></SearchBox>
                </SectionHead>
                {COMP_ROWS.map(row => (
                  <CompRow key={row.name} $indent={row.indent} $selected={row.selected}>
                    <CompCaret>{row.caret && <Caret $w={12} $h={7} $color="#b4b4b4" />}</CompCaret>
                    <CompIcon>{row.icon}</CompIcon>
                    <CompName $w={row.nameW}>{row.name}</CompName>
                    <CompId $selected={row.selected}>{row.id}</CompId>
                    <RowActions>
                      {row.copy && <CopyMark />}
                      {row.eye && <Eye />}
                    </RowActions>
                  </CompRow>
                ))}
              </TreeSection>
            </Palette>

            <Canvas>
              <CanvasTools>
                <ToolRow $h={40}>
                  <DeviceName>P40</DeviceName>
                  <Tool $ml={3} $color="#888"><ChevronDown size={16} strokeWidth={1.2} /></Tool>
                  <Resolution>1080 x 2340</Resolution>
                  <Tool $ml={117}><CircleSign /></Tool>
                  <Zoom>25%</Zoom>
                  <Tool $ml={15}><CircleSign plus /></Tool>
                </ToolRow>
                <ToolRow $h={36} $end>
                  <Tool $color="#808080"><FaReply size={19} /></Tool>
                  <Tool $ml={17} $color="#dcdcdc"><FaShare size={18} /></Tool>
                  <Tool $ml={17}><RotateDevice /></Tool>
                  <Tool $ml={16}><Faint /></Tool>
                </ToolRow>
              </CanvasTools>
              <CanvasArea>
                <Page>
                  <PageColumn>
                    <SelectedBox>
                      你好世界
                      {[[0, 0], [50, 0], [100, 0], [0, 50], [100, 50], [0, 100], [50, 100], [100, 100]].map(([x, y]) => (
                        <Handle key={`${x}-${y}`} $x={x} $y={y} />
                      ))}
                      <MoveHandle><Move size={24} strokeWidth={2} /></MoveHandle>
                    </SelectedBox>
                    <ButtonFrame>
                      <DesignButton>跳转界面</DesignButton>
                    </ButtonFrame>
                  </PageColumn>
                </Page>
              </CanvasArea>
            </Canvas>
          </CenterBody>
          <HScrollTrack><HScrollThumb /></HScrollTrack>
        </CenterColumn>

        <Preview>
          <PanelHeader $pad="0 8px 0 8px" $size={16}>
            Previewer
            <Pushed><TextSize /></Pushed>
            <Tool $ml={15}><Refresh /></Tool>
            <Tool $ml={16}><Plug /></Tool>
            <Sep $ml={12} />
            <Tool $ml={12}><FaCog size={16} /></Tool>
            <Tool $ml={16}><MinusBar /></Tool>
          </PanelHeader>
          <PreviewBar>
            entry : ...es/Index
            <PreviewSelect>
              <Layouts />
              <Caret $w={12} $h={8} $color="#444" />
            </PreviewSelect>
            <Tool $ml={21}><Frames /></Tool>
            <Tool $ml={17}><ZoomGlass /></Tool>
            <Tool $ml={17}><ZoomGlass plus /></Tool>
            <Tool $ml={15}><Fit /></Tool>
            <Tool $ml={10} $color="#666">1:1</Tool>
          </PreviewBar>
          <PreviewBody>
            <DeviceLabel>Phone (medium)</DeviceLabel>
            <DeviceTools>
              <DeviceTool><Back /></DeviceTool>
              <DeviceTool><RotateDevice /></DeviceTool>
              <DeviceTool><Dots /></DeviceTool>
            </DeviceTools>
            <Phone>
              <PhoneKey $top={120} $h={79} />
              <PhoneKey $top={212} $h={40} />
              <Screen>
                <PhoneText>你好世界</PhoneText>
                <PhoneButton>跳转界面</PhoneButton>
              </Screen>
            </Phone>
          </PreviewBody>
          <VScroll />
          <BottomScroll />
        </Preview>

        <RightStrip>
          <Tool $color="#707070"><FaBell size={15} /></Tool>
          <VerticalLabel $mt={5} $spacing={0.7}>Notifications</VerticalLabel>
          <StripTab>
            <Eye color="#7c7c7c" />
            <VerticalLabel $mt={8}>Previewer</VerticalLabel>
          </StripTab>
        </RightStrip>
      </Workspace>

      <StatusBar>
        {STATUS_TIPS.map(([ml, w], i) => <StatusTip key={i} $ml={ml} $w={w} />)}
      </StatusBar>

      <Annotation width="1901" height="975" viewBox="0 0 1901 975">
        <path d="M998 877 L1362 656" stroke="#ed1c24" strokeWidth="12" strokeLinecap="round" />
        <path d="M1391 635 L1326 646 L1353 689 Z" fill="#ed1c24" />
      </Annotation>
      <Watermark>CSDN @跟 耿瑞 卷出一片天</Watermark>
    </Frame>
  )
}
